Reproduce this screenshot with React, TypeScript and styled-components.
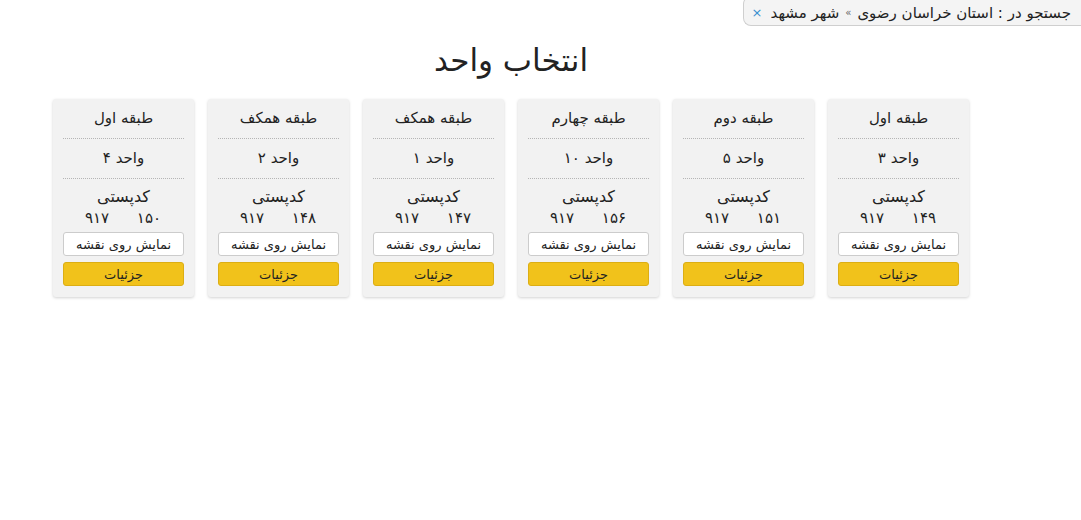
import styled, { createGlobalStyle } from "styled-components";

const GlobalStyle = createGlobalStyle`
  html, body {
    margin: 0;
    padding: 0;
    background: #fff;
    font-family: "DejaVu Sans", "Noto Sans", sans-serif;
    color: #222;
  }
`;

const Page = styled.div`
  direction: rtl;
  width: 1081px;
  min-height: 520px;
`;

const SearchBar = styled.div`
  display: flex;
  justify-content: flex-start;
  height: 26px;
  overflow: hidden;
`;

const Crumbs = styled.div`
  display: flex;
  align-items: center;
  gap: 4px;
  height: 30px;
  margin-top: -4px;
  padding: 3px 10px 0 8px;
  background: #f4f4f4;
  border: 1px solid #cfcfcf;
  border-right: none;
  border-radius: 8px 0 0 8px;
  font-size: 15px;
  color: #222;
  white-space: nowrap;
  box-sizing: border-box;
`;

const Sep = styled.span`
  font-size: 10px;
  color: #666;
  padding: 0 2px;
`;

const Close = styled.span`
  color: #3a8fd0;
  font-size: 13px;
  margin-right: 4px;
  cursor: pointer;
`;

const Main = styled.div`
  width: 1022px;
  margin-right: auto;
  margin-left: 0;
  display: flex;
  flex-direction: column;
  align-items: center;
`;

const Title = styled.h1`
  margin: 16px 0 21px;
  font-size: 31px;
  font-weight: normal;
  line-height: 36px;
  color: #222;
`;

const Grid = styled.div`
  display: flex;
  gap: 14px;
`;

const Card = styled.div`
  width: 141px;
  background: #f2f2f2;
  border-radius: 3px;
  box-shadow: 0 1px 3px rgba(0, 0, 0, 0.18);
  padding: 0 10px 11px;
  box-sizing: border-box;
  display: flex;
  flex-direction: column;
  text-align: center;
`;

const Row = styled.div`
  height: 39px;
  line-height: 38px;
  font-size: 15px;
  border-bottom: 1px dotted #b5b5b5;
`;

const Postal = styled.div`
  font-size: 16px;
  line-height: 21px;
  margin-top: 7px;
`;

const Codes = styled.div`
  display: flex;
  justify-content: space-between;
  padding: 0 23px 0 22px;
  font-size: 15px;
  line-height: 22px;
`;

const Button = styled.button<{ $primary?: boolean }>`
  height: 24px;
  margin-top: ${p => (p.$primary ? "6px" : "3px")};
  padding: 0;
  font-family: inherit;
  font-size: 13px;
  color: #222;
  border-radius: 3px;
  cursor: pointer;
  background: ${p => (p.$primary ? "#f1c21b" : "#fff")};
  border: 1px solid ${p => (p.$primary ? "#dcae14" : "#ccc")};
`;

interface Unit {
  floor: string;
  unit: string;
  code: string;
}

const units: Unit[] = [
  { floor: "طبقه اول", unit: "واحد ۳", code: "۱۴۹" },
  { floor: "طبقه دوم", unit: "واحد ۵", code: "۱۵۱" },
  { floor: "طبقه چهارم", unit: "واحد ۱۰", code: "۱۵۶" },
  { floor: "طبقه همکف", unit: "واحد ۱", code: "۱۴۷" },
  { floor: "طبقه همکف", unit: "واحد ۲", code: "۱۴۸" },
  { floor: "طبقه اول", unit: "واحد ۴", code: "۱۵۰" },
];

export default function App() {
  return (
    <Page>
      <GlobalStyle />
      <SearchBar>
        <Crumbs>
          <span>جستجو در : استان خراسان رضوی</span>
          <Sep>»</Sep>
          <span>شهر مشهد</span>
          <Close>×</Close>
        </Crumbs>
      </SearchBar>
      <Main>
        <Title>انتخاب واحد</Title>
        <Grid>
          {units.map((u, i) => (
            <Card key={i}>
              <Row>{u.floor}</Row>
              <Row>{u.unit}</Row>
              <Postal>کدپستی</Postal>
              <Codes>
                <span>{u.code}</span>
                <span>۹۱۷</span>
              </Codes>
              <Button>نمایش روی نقشه</Button>
              <Button $primary>جزئیات</Button>
            </Card>
          ))}
        </Grid>
      </Main>
    </Page>
  );
}
